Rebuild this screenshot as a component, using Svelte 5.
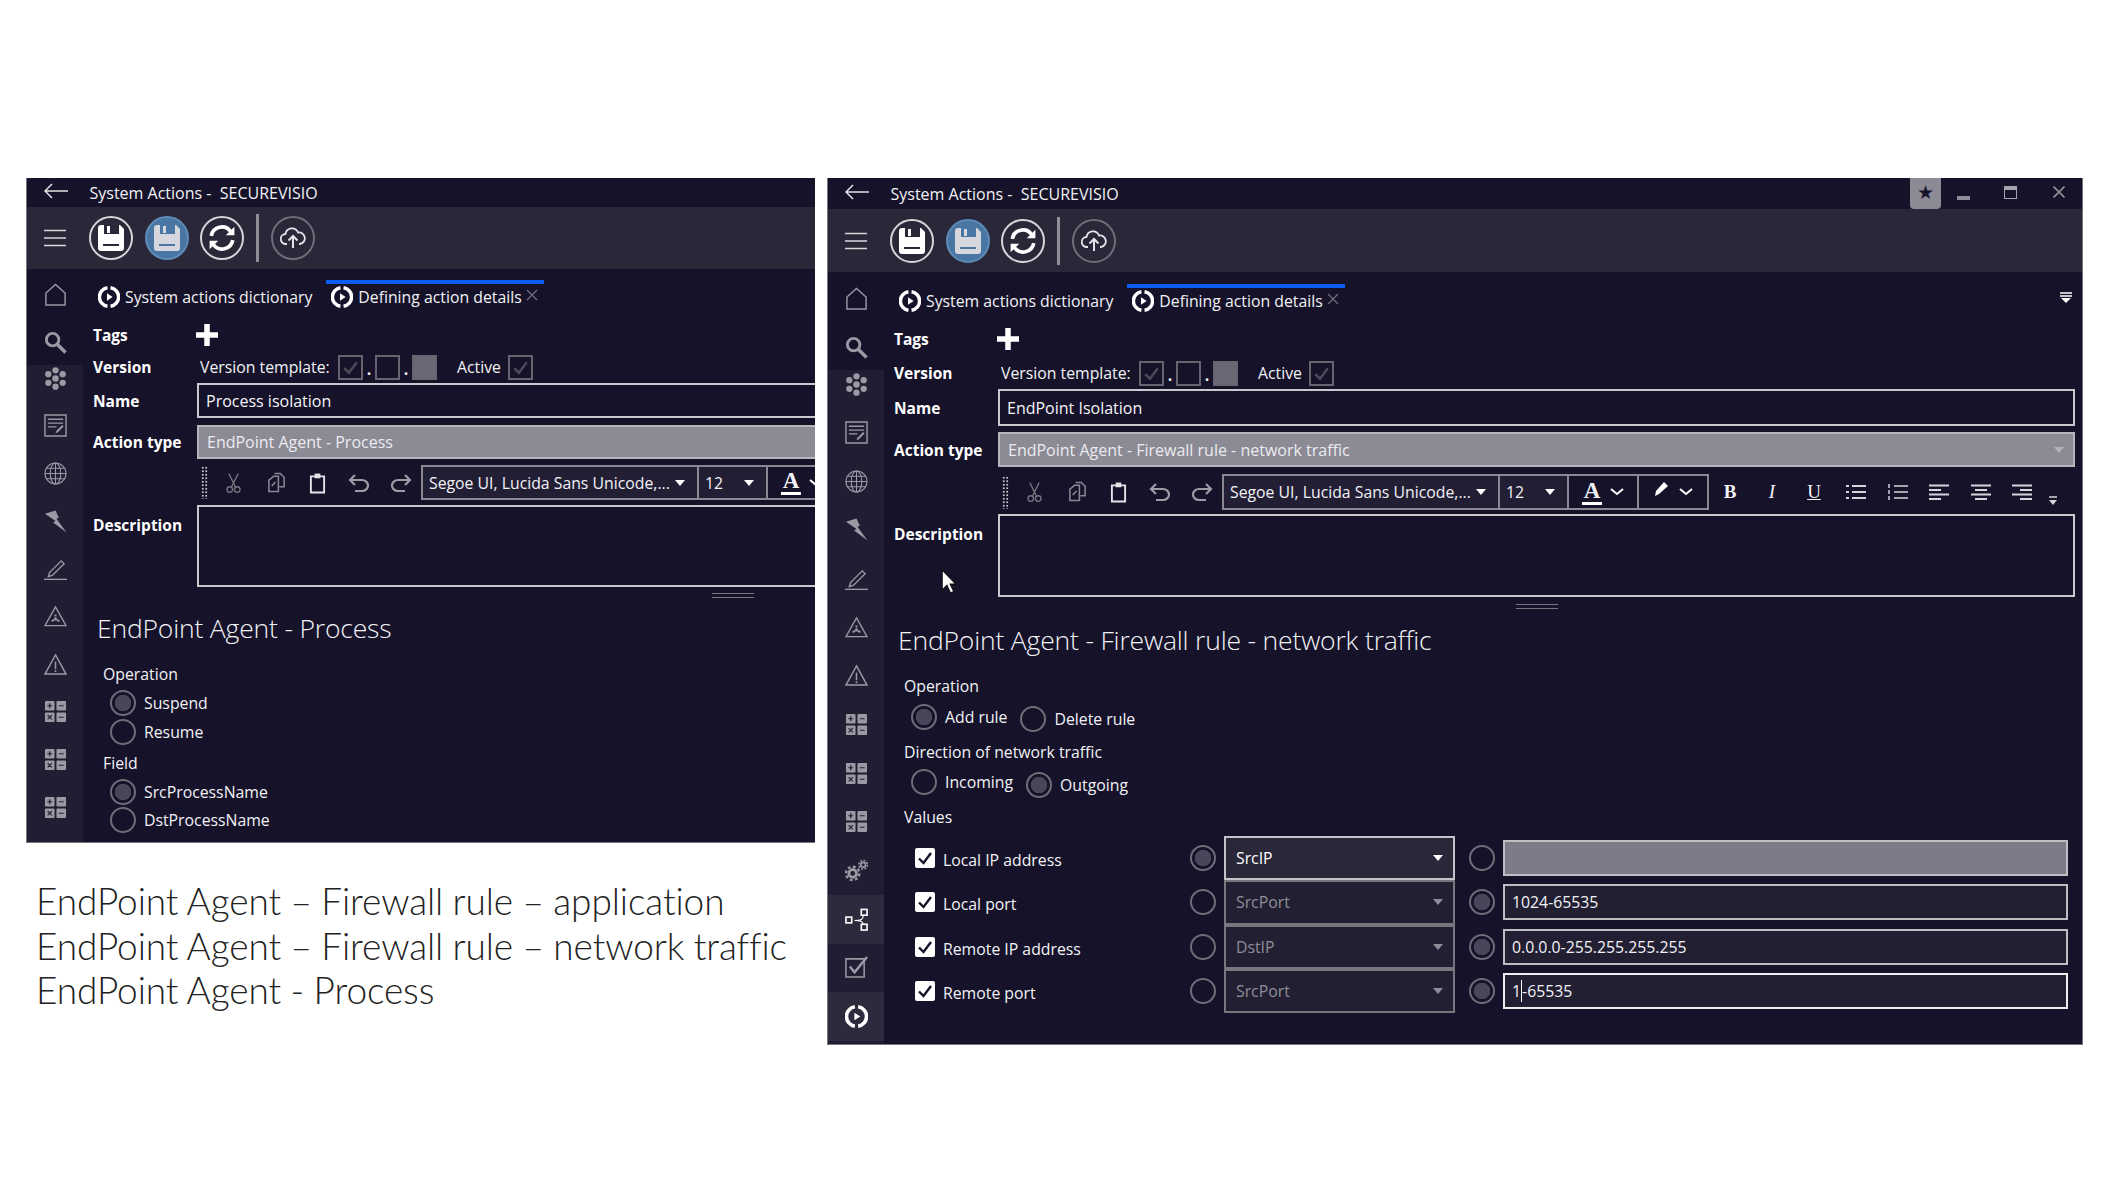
<script>
  const leftSide = ["flower", "note", "globe", "bolt", "pen", "hazard", "warn", "grid", "grid", "grid"];
  const rightSide = [...leftSide, "gears", "network", "check", "logo"];

  const rows = [
    { label: "Local IP address", field: "SrcIP", value: "", active: true, firstOn: true },
    { label: "Local port", field: "SrcPort", value: "1024-65535" },
    { label: "Remote IP address", field: "DstIP", value: "0.0.0.0-255.255.255.255" },
    { label: "Remote port", field: "SrcPort", value: "1-65535", caret: true },
  ];
</script>

{#snippet sideIcon(name)}
  <svg viewBox="0 0 24 24" class="side-icon">
    {#if name === "home"}
      <path d="M2 23V10.500L12 1.500l10 9V23z" fill="none" stroke="currentColor" stroke-width="1.500" />
    {:else if name === "search"}
      <circle cx="9" cy="9" r="6.500" fill="none" stroke="currentColor" stroke-width="3" />
      <path d="M14 14l8.500 8.500" stroke="currentColor" stroke-width="3.600" />
    {:else if name === "flower"}
      <g fill="currentColor">
        <circle cx="12" cy="12" r="3.400" /><circle cx="12" cy="3.500" r="3.300" /><circle cx="12" cy="20.500" r="3.300" />
        <circle cx="4.500" cy="7.500" r="3.300" /><circle cx="19.500" cy="7.500" r="3.300" />
        <circle cx="4.500" cy="16.500" r="3.300" /><circle cx="19.500" cy="16.500" r="3.300" />
      </g>
    {:else if name === "note"}
      <path d="M1 1h22v22H1z" fill="none" stroke="currentColor" stroke-width="1.500" />
      <path d="M4 5.500h16M4 9.500h16M4 13.500h9" stroke="currentColor" stroke-width="1.400" />
      <path d="M12 20l1-2.500 6-6 1.500 1.500-6 6z" fill="currentColor" />
    {:else if name === "globe"}
      <g fill="none" stroke="currentColor" stroke-width="1.100">
        <circle cx="12" cy="12" r="11" /><ellipse cx="12" cy="12" rx="5.500" ry="11" />
        <path d="M12 1v22M1 12h22M2.500 6.500h19M2.500 17.500h19" />
      </g>
    {:else if name === "bolt"}
      <path d="M1 4L12 0.500l3.500 7.500-2.500 1 10.500 14.500L9.500 13l2.500-1.500z" fill="currentColor" />
    {:else if name === "pen"}
      <path d="M6 16l-1.500 4.500L9 19 21 7l-3-3z" fill="none" stroke="currentColor" stroke-width="1.400" />
      <path d="M0 23.300h24" stroke="currentColor" stroke-width="1.400" />
    {:else if name === "hazard"}
      <path d="M12 2l11 19.500H1z" fill="none" stroke="currentColor" stroke-width="1.400" />
      <circle cx="12" cy="14.500" r="1.600" fill="currentColor" />
      <path d="M8 17l2.500-1.500M16 17l-2.500-1.500M12 10v2" stroke="currentColor" stroke-width="2" />
    {:else if name === "warn"}
      <path d="M12 2l11 20H1z" fill="none" stroke="currentColor" stroke-width="1.500" />
      <path d="M12 9v8" stroke="currentColor" stroke-width="1.600" /><circle cx="12" cy="19" r="1" fill="currentColor" />
    {:else if name === "grid"}
      <g fill="currentColor">
        <rect x="1" y="1" width="10" height="10" rx="1" /><rect x="13" y="1" width="10" height="10" rx="1" />
        <rect x="1" y="13" width="10" height="10" rx="1" /><rect x="13" y="13" width="10" height="10" rx="1" />
      </g>
      <path d="M3.500 6h5M6 3.500v5M15.500 6h5M3.800 15.800l4.400 4.400M8.200 15.800l-4.400 4.400M15.500 18h5" stroke="#221f35" stroke-width="1.300" />
    {:else if name === "gears"}
      <g fill="none" stroke="currentColor">
        <circle cx="8" cy="15" r="4" stroke-width="3" />
        <circle cx="8" cy="15" r="7" stroke-width="2.400" stroke-dasharray="3 2.500" />
        <circle cx="19" cy="6" r="2.500" stroke-width="1.800" />
        <circle cx="19" cy="6" r="4.500" stroke-width="1.600" stroke-dasharray="2 1.500" />
      </g>
    {:else if name === "network"}
      <g fill="none" stroke="#fff" stroke-width="1.700">
        <rect x="1" y="9.500" width="6" height="6" /><rect x="17" y="1.500" width="6" height="6" /><rect x="17" y="17" width="6" height="6" />
        <path d="M19 8c0 4-2 5-9 5M19 17c0-2-3-4-9-4" stroke-width="1.200" />
      </g>
    {:else if name === "check"}
      <path d="M1 3h19v19H1z" fill="none" stroke="currentColor" stroke-width="1.600" />
      <path d="M5 11l5 6L23 1" fill="none" stroke="currentColor" stroke-width="2.600" />
    {:else if name === "logo"}
      {@render logoPaths()}
    {/if}
  </svg>
{/snippet}

{#snippet logoPaths()}
  <path d="M10.300 1.900a10.200 10.200 0 0 0 0 20.200M13.700 1.900a10.200 10.200 0 0 1 0 20.200" fill="none" stroke="#fff" stroke-width="3.800" />
  <path d="M9.800 8l6.200 4-6.200 4z" fill="#fff" />
{/snippet}

{#snippet logo()}
  <svg viewBox="0 0 24 24" class="tab-logo">{@render logoPaths()}</svg>
{/snippet}

{#snippet disk(fill, hole)}
  <svg viewBox="0 0 26 26" class="disk">
    <path d="M0 3a3 3 0 0 1 3-3h19l4 4v19a3 3 0 0 1-3 3H3a3 3 0 0 1-3-3z" fill={fill} />
    <path d="M6 0h15v9H6z" fill={hole} />
    <path d="M9 1h3v7H9z" fill={fill} />
    <path d="M5 19h16v2H5z" fill={hole} />
  </svg>
{/snippet}

{#snippet titleBar()}
  <div class="title">
    <svg viewBox="0 0 24 16" class="back"><path d="M24 8H1M8 1L1 8l7 7" fill="none" stroke="#e4e4e8" stroke-width="1.500" /></svg>
    <span class="title-text">System Actions -&nbsp; SECUREVISIO</span>
  </div>
{/snippet}

{#snippet appBar()}
  <div class="appbar">
    <svg viewBox="0 0 22 18" class="burger"><path d="M0 1.500h22M0 9h22M0 16.500h22" stroke="#d8d8dc" stroke-width="1.400" /></svg>
    <div class="appbar-btns">
      <span class="round">{@render disk("#fff", "#2a2739")}</span>
      <span class="round blue">{@render disk("#d6d7de", "#4a76a3")}</span>
      <span class="round">
        <svg viewBox="0 0 26 26" class="sync">
          <path d="M3 11a10 10 0 0 1 18-4M23 15a10 10 0 0 1-18 4" fill="none" stroke="#fff" stroke-width="3.400" />
          <path d="M24.500 2.500v8h-8zM1.500 23.500v-8h8z" fill="#fff" />
        </svg>
      </span>
      <span class="sep"></span>
      <span class="round dim">
        <svg viewBox="0 0 26 26" class="cloud">
          <path d="M7 19H6a5 5 0 0 1-.5-10A6.500 6.500 0 0 1 18 7.500 5.800 5.800 0 0 1 20 19h-1" fill="none" stroke="#e4e4e8" stroke-width="1.800" />
          <path d="M13 23V11M8.500 15.500L13 11l4.500 4.500" fill="none" stroke="#e4e4e8" stroke-width="2" />
        </svg>
      </span>
    </div>
  </div>
{/snippet}

{#snippet sideBar(items)}
  <div class="side">
    <div class="side-top">
      <div class="side-home">{@render sideIcon("home")}</div>
      <div class="side-search">{@render sideIcon("search")}</div>
    </div>
    <div class="side-flower">{@render sideIcon(items[0])}</div>
    <div class="side-rest">
      {#each items.slice(1) as name}
        <div class="side-item" class:lit={name === "network" || name === "logo"} class:white={name === "logo"}>
          {@render sideIcon(name)}
        </div>
      {/each}
    </div>
  </div>
{/snippet}

{#snippet tabs()}
  <div class="tabs">
    <div class="tab">{@render logo()}<span>System actions dictionary</span></div>
    <div class="tab active">
      {@render logo()}<span>Defining action details</span>
      <svg viewBox="0 0 12 12" class="tab-x"><path d="M1 1l10 10M11 1L1 11" stroke="#6f6e79" stroke-width="1.300" /></svg>
    </div>
  </div>
{/snippet}

{#snippet tick(color)}
  <svg viewBox="0 0 20 20" class="tick"><path d="M4 10.500l4.500 4.500L16 5" fill="none" stroke={color} stroke-width="2.400" /></svg>
{/snippet}

{#snippet headRows(name, action, withCaret)}
  <div class="row tags">
    <span class="row-label">Tags</span>
    <svg viewBox="0 0 22 22" class="plus"><path d="M11 0v22M0 11h22" stroke="#fff" stroke-width="5.500" /></svg>
  </div>
  <div class="row version">
    <span class="row-label">Version</span>
    <span class="vt-label">Version template:</span>
    <span class="mini">{@render tick("#4b4a56")}</span><i class="dot">.</i>
    <span class="mini"></span><i class="dot">.</i>
    <span class="mini filled"></span>
    <span class="active-label">Active</span>
    <span class="mini">{@render tick("#4b4a56")}</span>
  </div>
  <div class="row name">
    <span class="row-label">Name</span>
    <div class="input">{name}</div>
  </div>
  <div class="row action">
    <span class="row-label">Action type</span>
    <div class="input grey">
      {action}
      {#if withCaret}<span class="caret grey-caret"></span>{/if}
    </div>
  </div>
{/snippet}

{#snippet editorBar(full)}
  <div class="row editor">
    <span class="row-label"></span>
    <span class="grip"></span>
    <svg viewBox="0 0 16 22" class="tb-icon scissors">
      <g fill="none" stroke="#77767f" stroke-width="1.400">
        <path d="M3 1l7 14M13 1L6 15" /><circle cx="4" cy="18" r="3" /><circle cx="12" cy="18" r="3" />
      </g>
    </svg>
    <svg viewBox="0 0 20 22" class="tb-icon copy">
      <g fill="none" stroke="#8a8993" stroke-width="1.600">
        <path d="M8 1h6l4 4v10h-5" /><path d="M2 8l5-4h5v16H2z" /><path d="M5 14l4-4" />
      </g>
    </svg>
    <svg viewBox="0 0 18 22" class="tb-icon paste">
      <path d="M2 4h14v17H2z" fill="none" stroke="#e4e4e8" stroke-width="2" /><path d="M6 1h6v5H6z" fill="#e4e4e8" />
    </svg>
    <svg viewBox="0 0 22 18" class="tb-icon undo">
      <path d="M2 6h12a6 5.500 0 0 1 0 11H7M7 1L2 6l5 5" fill="none" stroke="#9c9ba6" stroke-width="2.200" />
    </svg>
    <svg viewBox="0 0 22 18" class="tb-icon redo">
      <path d="M20 6H8a6 5.500 0 0 0 0 11h7M15 1l5 5-5 5" fill="none" stroke="#9c9ba6" stroke-width="2.200" />
    </svg>
    <div class="combo font">Segoe UI, Lucida Sans Unicode,...<span class="caret"></span></div>
    <div class="combo size">12<span class="caret"></span></div>
    <div class="combo color">
      <span class="big-a">A</span>
      <svg viewBox="0 0 14 8" class="chev"><path d="M1 1l6 5 6-5" fill="none" stroke="#fff" stroke-width="2" /></svg>
    </div>
    {#if full}
      <div class="combo color marker">
        <svg viewBox="0 0 18 18" class="marker-pen"><path d="M2 16l1-5 8-9 4 4-9 8z" fill="#fff" /></svg>
        <svg viewBox="0 0 14 8" class="chev"><path d="M1 1l6 5 6-5" fill="none" stroke="#fff" stroke-width="2" /></svg>
      </div>
      <span class="fmt b">B</span>
      <span class="fmt i">I</span>
      <span class="fmt u">U</span>
      <svg viewBox="0 0 20 16" class="para"><path d="M6 2h14M6 8h14M6 14h14M0 2h3M0 8h3M0 14h3" stroke="#d4d4da" stroke-width="1.800" /></svg>
      <svg viewBox="0 0 20 16" class="para"><path d="M6 2h14M6 8h14M6 14h14M1 0v4M1 6v4M1 12v4" stroke="#d4d4da" stroke-width="1.500" /></svg>
      <svg viewBox="0 0 20 16" class="para"><path d="M0 1.500h20M0 6h12M0 10.500h20M0 15h12" stroke="#d4d4da" stroke-width="1.800" /></svg>
      <svg viewBox="0 0 20 16" class="para"><path d="M0 1.500h20M4 6h12M0 10.500h20M4 15h12" stroke="#d4d4da" stroke-width="1.800" /></svg>
      <svg viewBox="0 0 20 16" class="para"><path d="M0 1.500h20M8 6h12M0 10.500h20M8 15h12" stroke="#d4d4da" stroke-width="1.800" /></svg>
      <svg viewBox="0 0 10 10" class="more"><path d="M1 1h8" stroke="#d4d4da" stroke-width="1.500" /><path d="M1 4h8L5 9z" fill="#d4d4da" /></svg>
    {/if}
  </div>
{/snippet}

{#snippet descRow()}
  <div class="row desc">
    <span class="row-label">Description</span>
    <div class="input area"></div>
  </div>
  <div class="splitter"><span></span></div>
{/snippet}

{#snippet radio(label, on, cls = "")}
  <label class="radio-item {cls}">
    <span class="radio" class:on></span>
    {#if label}<span>{label}</span>{/if}
  </label>
{/snippet}

<div class="page">
  <div class="col-left">
    <section class="win win-l">
      {@render titleBar()}
      {@render appBar()}
      <div class="body">
        {@render sideBar(leftSide)}
        <div class="main">
          {@render tabs()}
          <div class="form">
            {@render headRows("Process isolation", "EndPoint Agent - Process", false)}
            {@render editorBar(false)}
            {@render descRow()}
          </div>
          <h2 class="heading">EndPoint Agent - Process</h2>
          <div class="group">
            <div class="group-label op">Operation</div>
            <div class="radio-row first">{@render radio("Suspend", true)}</div>
            <div class="radio-row">{@render radio("Resume", false)}</div>
            <div class="group-label field">Field</div>
            <div class="radio-row first-f">{@render radio("SrcProcessName", true)}</div>
            <div class="radio-row last-f">{@render radio("DstProcessName", false)}</div>
          </div>
        </div>
      </div>
    </section>
    <div class="caption">
      <div>EndPoint Agent – Firewall rule – application</div>
      <div>EndPoint Agent – Firewall rule – network traffic</div>
      <div>EndPoint Agent - Process</div>
    </div>
  </div>

  <section class="win win-r">
    <div class="title-wrap">
      {@render titleBar()}
      <div class="winbtns">
        <span class="star">★</span>
        <span class="min"></span>
        <span class="max"></span>
        <svg viewBox="0 0 12 12" class="close"><path d="M0.500 0.500l11 11M11.500 0.500l-11 11" stroke="#8f8e98" stroke-width="1.600" /></svg>
      </div>
    </div>
    {@render appBar()}
    <div class="body">
      {@render sideBar(rightSide)}
      <div class="main">
        {@render tabs()}
        <svg viewBox="0 0 12 11" class="tabs-more"><path d="M0 1h12M0 4h12" stroke="#fff" stroke-width="1.600" /><path d="M1 6h10L6 11z" fill="#fff" /></svg>
        <div class="form">
          {@render headRows("EndPoint Isolation", "EndPoint Agent - Firewall rule - network traffic", true)}
          {@render editorBar(true)}
          {@render descRow()}
        </div>
        <h2 class="heading">EndPoint Agent - Firewall rule - network traffic</h2>
        <div class="group">
          <div class="group-label op">Operation</div>
          <div class="radio-row pair first">
            {@render radio("Add rule", true)}
            {@render radio("Delete rule", false, "nudge-del")}
          </div>
          <div class="group-label dir">Direction of network traffic</div>
          <div class="radio-row pair second">
            {@render radio("Incoming", false)}
            {@render radio("Outgoing", true, "nudge-out")}
          </div>
          <div class="group-label vals">Values</div>
        </div>
        <div class="values">
          {#each rows as row, i}
            <span class="check">{@render tick("#15122a")}</span>
            <span class="val-label">{row.label}</span>
            <span class="val-radio">{@render radio("", i === 0)}</span>
            <div class="dropdown" class:current={row.active}>{row.field}<span class="caret"></span></div>
            <span class="val-radio">{@render radio("", i !== 0)}</span>
            <div class="value-cell">
              <div class="val-input" class:off={i === 0} class:focus={row.caret}>
                {#if row.caret}1<span class="text-caret"></span>-65535{:else}{row.value}{/if}
              </div>
            </div>
          {/each}
        </div>
        <svg viewBox="0 0 14 24" class="cursor"><path d="M1 1v19l4.500-4.500L9 23l3-1.500L8.500 14.500H14z" fill="#fff" stroke="#111" stroke-width="1" /></svg>
      </div>
    </div>
  </section>
</div>

<style>
  :global(body) {
    margin: 0;
    background: #fff;
  }

  .page {
    width: 2111px;
    height: 1187px;
    box-sizing: border-box;
    padding: 178px 0 0 26px;
    display: flex;
    gap: 12px;
    align-items: flex-start;
    overflow: hidden;
    font-family: "Open Sans", "Noto Sans", sans-serif;
    font-size: 15.800px;
    color: #f2f2f5;
  }

  .col-left {
    width: 789px;
  }

  .caption {
    margin-top: 36px;
    padding-left: 10px;
    font-family: Lato, sans-serif;
    font-weight: 300;
    font-size: 37px;
    line-height: 44.500px;
    letter-spacing: -0.1px;
    word-spacing: -0.5px;
    color: #222;
    white-space: nowrap;
  }

  .win {
    --main: #15122a;
    --bar: #2a2739;
    --rail: #211e33;
    box-sizing: border-box;
    border-left: 1px solid #77767f;
    border-bottom: 1px solid #77767f;
    background: var(--main);
    overflow: hidden;
    display: flex;
    flex-direction: column;
    position: relative;
  }

  .win-l {
    width: 789px;
    height: 665px;
    --title-h: 29px;
    --bar-h: 62px;
    --tabs-h: 52px;
    --tab-top: 11px;
    --side-top: 96px;
    --home-h: 50px;
    --flower-h: 26px;
    --rest-top: 11px;
    --item-h: 47.700px;
    --tags-top: 1px;
    --version-top: 6px;
    --name-top: 3px;
    --name-h: 35px;
    --action-top: 7px;
    --action-h: 34px;
    --editor-top: 6px;
    --editor-h: 35px;
    --desc-top: 5px;
    --desc-h: 82px;
    --split-top: 6px;
    --head-top: 10px;
  }

  .win-r {
    width: 1256px;
    height: 867px;
    border-right: 1px solid #77767f;
    --title-h: 31px;
    --bar-h: 63px;
    --tabs-h: 53px;
    --tab-top: 12px;
    --side-top: 98px;
    --home-h: 52px;
    --flower-h: 28px;
    --rest-top: 10px;
    --item-h: 48.700px;
    --tags-top: 1px;
    --version-top: 8px;
    --name-top: 3px;
    --name-h: 37px;
    --action-top: 6px;
    --action-h: 35px;
    --editor-top: 7px;
    --editor-h: 36px;
    --desc-top: 4px;
    --desc-h: 83px;
    --split-top: 7px;
    --head-top: 11px;
  }

  .title-wrap {
    display: flex;
    justify-content: space-between;
    align-items: flex-start;
  }

  .title {
    height: var(--title-h);
    display: flex;
    align-items: center;
    flex-shrink: 0;
  }

  .back {
    width: 24px;
    height: 16px;
    margin: -4px 0 0 17px;
  }

  .title-text {
    margin-left: 21.500px;
    font-size: 16px;
    white-space: pre;
  }

  .winbtns {
    display: flex;
    align-items: flex-start;
    margin-right: 17px;
  }

  .star {
    width: 31px;
    height: 31px;
    background: #8b8a95;
    border-radius: 0 0 4px 4px;
    color: #15122a;
    font-family: "DejaVu Sans", sans-serif;
    font-size: 19px;
    line-height: 29px;
    text-align: center;
  }

  .min {
    width: 13px;
    height: 4px;
    margin: 18px 0 0 16px;
    background: #8f8e98;
  }

  .max {
    width: 13px;
    height: 13px;
    margin: 8px 0 0 34px;
    box-sizing: border-box;
    border: 1.500px solid #a5a4ae;
    border-top-width: 4px;
  }

  .close {
    width: 12px;
    height: 12px;
    margin: 8px 0 0 36px;
  }

  .appbar {
    height: var(--bar-h);
    background: var(--bar);
    display: flex;
    align-items: center;
    flex-shrink: 0;
  }

  .burger {
    width: 22px;
    height: 18px;
    margin-left: 17px;
  }

  .appbar-btns {
    display: flex;
    align-items: center;
    gap: 11.500px;
    margin-left: 23px;
  }

  .round {
    width: 44px;
    height: 44px;
    box-sizing: border-box;
    border: 2px solid #d6d6da;
    border-radius: 50%;
    display: flex;
    align-items: center;
    justify-content: center;
  }

  .round.blue {
    background: #4a76a3;
    border-color: #5f8bb8;
  }

  .round.dim {
    border-color: #6e6d78;
  }

  .sep {
    width: 3px;
    height: 48px;
    margin-right: 1px;
    background: #8f8e98;
  }

  .disk {
    width: 26px;
    height: 26px;
  }

  .sync {
    width: 28px;
    height: 28px;
  }

  .cloud {
    width: 26px;
    height: 26px;
  }

  .body {
    flex: 1;
    display: flex;
    min-height: 0;
  }

  .side {
    width: 56px;
    flex-shrink: 0;
    background: var(--rail);
    color: #9a99a4;
    display: flex;
    flex-direction: column;
    align-items: stretch;
  }

  .side-top {
    height: var(--side-top);
    background: var(--main);
  }

  .side-home {
    height: var(--home-h);
    display: flex;
    align-items: center;
    justify-content: center;
  }

  .side-search {
    height: calc(var(--side-top) - var(--home-h));
    display: flex;
    align-items: center;
    justify-content: center;
  }

  .side-flower {
    height: var(--flower-h);
    display: flex;
    align-items: center;
    justify-content: center;
  }

  .side-rest {
    margin-top: var(--rest-top);
  }

  .side-item {
    height: var(--item-h);
    display: flex;
    align-items: center;
    justify-content: center;
  }

  .side-item.lit {
    background: #2d2a3d;
  }

  .side-item.white {
    color: #fff;
  }

  .side-icon {
    width: 23px;
    height: 23px;
  }

  .main {
    flex: 1;
    min-width: 0;
    position: relative;
  }

  .tabs {
    height: var(--tabs-h);
    display: flex;
    gap: 14px;
    padding: var(--tab-top) 0 0 15px;
    box-sizing: border-box;
  }

  .tab {
    height: 30px;
    box-sizing: border-box;
    border-top: 4px solid transparent;
    display: flex;
    align-items: center;
    gap: 5px;
    white-space: nowrap;
    font-size: 15.800px;
  }

  .tab.active {
    border-top-color: #0a5df0;
    width: 218px;
    padding-left: 5px;
  }

  .tab-logo {
    width: 22px;
    height: 22px;
    flex-shrink: 0;
  }

  .tab-x {
    width: 12px;
    height: 12px;
    margin: -5px 0 0 -1px;
  }

  .tabs-more {
    position: absolute;
    top: 20px;
    right: 10px;
    width: 12px;
    height: 11px;
  }

  .form {
    padding-left: 10px;
    padding-right: 7px;
  }

  .win-l .form {
    margin-right: -40px;
  }

  .row {
    display: flex;
    align-items: center;
  }

  .row > * {
    flex-shrink: 0;
  }

  .row-label {
    width: 104px;
    font-weight: 700;
    font-size: 15.500px;
    color: #fff;
  }

  .tags {
    height: 26px;
    margin-top: var(--tags-top);
  }

  .plus {
    width: 22px;
    height: 22px;
    margin-left: -1px;
  }

  .version {
    height: 26px;
    margin-top: var(--version-top);
  }

  .vt-label {
    margin-left: 3px;
    width: 138px;
    white-space: nowrap;
  }

  .active-label {
    margin: 0 7px 0 20px;
  }

  .mini {
    width: 25px;
    height: 25px;
    box-sizing: border-box;
    border: 2px solid #66656f;
    display: flex;
    align-items: center;
    justify-content: center;
  }

  .mini.filled {
    background: #696874;
  }

  .dot {
    width: 12px;
    text-align: center;
    font-style: normal;
    font-weight: 700;
    line-height: 1;
    padding-top: 6px;
  }

  .tick {
    width: 100%;
    height: 100%;
  }

  .name {
    height: var(--name-h);
    margin-top: var(--name-top);
  }

  .action {
    height: var(--action-h);
    margin-top: var(--action-top);
  }

  .row > .input {
    flex: 1;
    flex-shrink: 1;
    min-width: 0;
  }

  .input {
    height: 100%;
    box-sizing: border-box;
    border: 2px solid #c9c9cd;
    display: flex;
    align-items: center;
    justify-content: space-between;
    padding: 0 10px 0 7px;
    font-size: 16px;
    color: #f5f5f7;
  }

  .input.grey {
    background: #8b8a95;
    border-color: #b6b5bc;
    padding-left: 8px;
    color: #ececf0;
  }

  .caret {
    width: 0;
    height: 0;
    border-left: 5px solid transparent;
    border-right: 5px solid transparent;
    border-top: 6px solid #fff;
    flex-shrink: 0;
  }

  .grey-caret {
    border-top-color: #b5b4bc;
    margin-right: -1px;
  }

  .editor {
    height: var(--editor-h);
    margin-top: var(--editor-top);
    white-space: nowrap;
  }

  .grip {
    width: 7px;
    height: 33px;
    margin-left: 4px;
    background-image: radial-gradient(circle, #c8c8cc 1px, transparent 1.300px);
    background-size: 3.500px 3.500px;
  }

  .tb-icon {
    height: 22px;
  }

  .scissors {
    width: 15px;
    margin-left: 18px;
  }

  .copy {
    width: 19px;
    margin-left: 26px;
  }

  .paste {
    width: 17px;
    margin-left: 23px;
  }

  .undo {
    width: 22px;
    height: 18px;
    margin-left: 22px;
  }

  .redo {
    width: 22px;
    height: 18px;
    margin-left: 20px;
  }

  .combo {
    height: 100%;
    box-sizing: border-box;
    border: 2px solid #8a8993;
    display: flex;
    align-items: center;
    justify-content: space-between;
    background: #221f35;
    padding: 0 8px 0 6px;
    margin-left: -2px;
  }

  .combo.font {
    width: 278px;
    margin-left: 9px;
    padding-right: 12px;
  }

  .combo.size {
    width: 71px;
    padding-right: 12px;
  }

  .combo.color {
    width: 72px;
    background: var(--main);
    justify-content: center;
    gap: 8px;
    padding: 0;
  }

  .big-a {
    font-family: "Liberation Serif", serif;
    font-weight: 700;
    font-size: 23px;
    line-height: 22px;
    border-bottom: 3px solid #fff;
    padding: 0 2px;
  }

  .chev {
    width: 14px;
    height: 8px;
  }

  .marker-pen {
    width: 18px;
    height: 18px;
    margin-top: -6px;
  }

  .fmt {
    width: 42px;
    text-align: center;
    font-family: "Liberation Serif", serif;
    font-size: 19px;
  }

  .fmt.b {
    font-weight: 700;
  }

  .fmt.i {
    font-style: italic;
  }

  .fmt.u {
    text-decoration: underline;
  }

  .para {
    width: 20px;
    height: 16px;
    margin-left: 21.500px;
  }

  .fmt.u + .para {
    margin-left: 11px;
  }

  .more {
    width: 10px;
    height: 10px;
    margin: 18px 0 0 16px;
  }

  .desc {
    align-items: flex-start;
    height: var(--desc-h);
    margin-top: var(--desc-top);
  }

  .desc .row-label {
    padding-top: 9px;
  }

  .splitter {
    height: 5px;
    margin-top: var(--split-top);
    margin-left: 104px;
    display: flex;
    justify-content: center;
  }

  .win-l .splitter {
    justify-content: flex-start;
    padding-left: 515px;
  }

  .splitter span {
    width: 42px;
    box-sizing: border-box;
    border-top: 1.500px solid #77767f;
    border-bottom: 1.500px solid #77767f;
  }

  .heading {
    height: 40px;
    margin: var(--head-top) 0 0 14px;
    font-weight: 300;
    font-size: 26.500px;
    line-height: 40px;
    letter-spacing: -0.18px;
    white-space: nowrap;
  }

  .group {
    padding-left: 20px;
  }

  .group-label {
    height: 24px;
    line-height: 24px;
  }

  .group-label.op {
    margin-top: 14px;
  }

  .group-label.field {
    margin-top: 6px;
  }

  .group-label.dir {
    margin-top: 10px;
  }

  .group-label.vals {
    margin-top: 10px;
  }

  .radio-row {
    height: 26px;
    margin-top: 3px;
    padding-left: 7px;
    display: flex;
  }

  .radio-row.first-f {
    margin-top: 4px;
  }

  .radio-row.last-f {
    margin-top: 2px;
  }

  .radio-row.first {
    margin-top: 4px;
  }

  .radio-row.pair.first {
    margin-top: 6px;
    gap: 13px;
  }

  .radio-row.pair.second {
    margin-top: 5px;
    gap: 13px;
  }

  .radio-item {
    display: flex;
    align-items: center;
    gap: 8px;
    height: 26px;
  }

  .nudge-del {
    margin-top: 2px;
  }

  .nudge-out {
    margin-top: 3px;
  }

  .radio {
    width: 26px;
    height: 26px;
    box-sizing: border-box;
    border: 2px solid #6e6d78;
    border-radius: 50%;
    flex-shrink: 0;
  }

  .radio.on {
    background: radial-gradient(circle, #484659 0 8px, transparent 8.500px);
  }

  .values {
    display: grid;
    grid-template-columns: 28px 247px 34px 245px 34px 1fr;
    grid-auto-rows: 44.250px;
    margin-top: 7px;
    padding-left: 31px;
    align-items: center;
  }

  .check {
    width: 20px;
    height: 20px;
    background: #fff;
    border-radius: 2px;
  }

  .val-label {
    padding-top: 4px;
  }

  .val-radio {
    display: flex;
  }

  .dropdown {
    width: 231px;
    height: 100%;
    box-sizing: border-box;
    border: 2px solid #77767f;
    background: #221f33;
    display: flex;
    align-items: center;
    justify-content: space-between;
    padding: 0 10px;
    color: #8f8e98;
  }

  .dropdown .caret {
    border-top-color: #8f8e98;
  }

  .dropdown.current {
    background: #2a2739;
    border-color: #c4c4c8;
    color: #fff;
  }

  .dropdown.current .caret {
    border-top-color: #fff;
  }

  .value-cell {
    padding-right: 14px;
  }

  .val-input {
    height: 36px;
    box-sizing: border-box;
    border: 2px solid #bdbdc2;
    background: #221f33;
    display: flex;
    align-items: center;
    padding: 0 7px;
  }

  .val-input.off {
    background: #7d7b87;
  }

  .val-input.focus {
    border-color: #eee;
  }

  .text-caret {
    width: 1px;
    height: 22px;
    background: #fff;
  }

  .cursor {
    position: absolute;
    left: 57px;
    top: 297px;
    width: 15px;
    height: 25px;
  }
</style>
